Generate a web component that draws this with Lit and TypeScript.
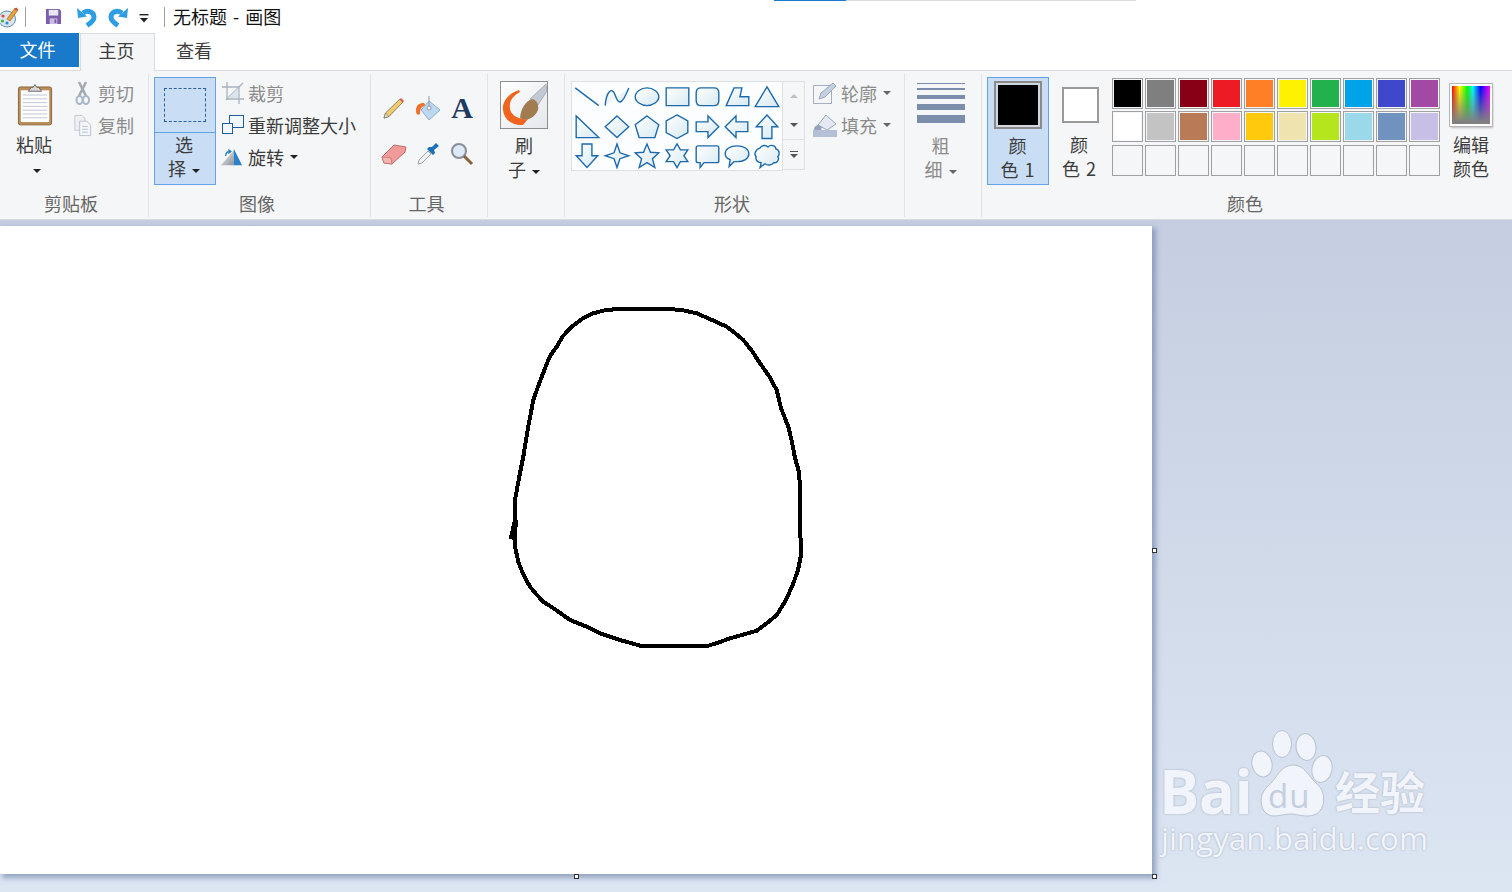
import { LitElement, html, css, svg } from "lit";
import { customElement } from "lit/decorators.js";

const SHAPES: string[] = [
  "M3 6L27 24",
  "M3 24C4 10 10 4 13 13S19 26 27 6",
  "M27 15C27 20 21 24 15 24S3 20 3 15 9 6 15 6 27 10 27 15Z",
  "M4 6H27V24H4Z",
  "M9 6H22Q27 6 27 11V19Q27 24 22 24H9Q4 24 4 19V11Q4 6 9 6Z",
  "M4 24L12 6H20L18 15H27V24Z",
  "M15 5L27 25H3Z",
  "M4 4V26H27Z",
  "M15 4L27 15 15 26 3 15Z",
  "M15 4L27 13 23 26H7L3 13Z",
  "M15 3L26 9V21L15 27 4 21V9Z",
  "M4 10H16V4L27 15 16 26V20H4Z",
  "M26 10H14V4L3 15 14 26V20H26Z",
  "M15 3L26 15H20V27H10V15H4Z",
  "M10 3H20V15H26L15 27 4 15H10Z",
  "M15 3L18 12 27 15 18 18 15 27 12 18 3 15 12 12Z",
  "M15 3L18.5 11.5 27 12 20.5 18 23 27 15 22 7 27 9.5 18 3 12 11.5 11.5Z",
  "M15 3L18.5 9H26L22 15 26 21H18.5L15 27 11.5 21H4L8 15 4 9H11.5Z",
  "M6 5H25Q27 5 27 7V20Q27 22 25 22H12L8 27V22H6Q4 22 4 20V7Q4 5 6 5Z",
  "M15 5C22 5 27 8 27 13S22 21 15 21H12L7 26 8 19C5 18 3 16 3 13 3 8 8 5 15 5Z",
  "M8 7C10 4 14 4 16 6 19 3 24 5 24 8 28 9 28 14 26 16 28 19 25 23 22 22 20 25 15 25 13 23L8 27 9 22C5 22 3 19 4 16 1 13 4 8 8 7Z",
];

const PALETTE = [
  "#000000","#7f7f7f","#880015","#ed1c24","#ff7f27","#fff200","#22b14c","#00a2e8","#3f48cc","#a349a4",
  "#ffffff","#c3c3c3","#b97a57","#ffaec9","#ffc90e","#efe4b0","#b5e61d","#99d9ea","#7092be","#c8bfe7",
  "","","","","","","","","","",
];

const BLOB = "510.7,539.3 515,520 515,500 519,478 523.3,456.7 528,428 533.3,400 539,384 545,368.3 550,356 556.7,346.7 563,336 571.7,326.7 582,319 593.3,313.3 604,310.5 616.7,309 670,309 684,310.5 696.7,313.3 712,320 726.7,326.7 735,333 743.3,340 752,351 760,363.3 769,376 776.7,390 781,408 788.3,426.7 792,442 795,458 799,472 800,486.7 800.7,556.7 798,570 793.3,583.3 786,600 776.7,615 767,623 756.7,630.7 742,635 730,638.3 720,642 708.3,645.7 640,645.7 620,640 600,633.3 585,626 570,620 556,610 543.3,601.7 536,594 530,586.7 523,574 518.3,561.7 515,546.7 515.7,520";

const caret = html`<i class="caret"></i>`;

@customElement("app-root")
export class AppRoot extends LitElement {
  static styles = css`
    :host {
      display: flex;
      flex-direction: column;
      width: 1512px;
      height: 892px;
      overflow: hidden;
      position: relative;
      background: #fff;
      font-family: "Noto Sans CJK SC", "Liberation Sans", sans-serif;
      font-size: 18px;
      color: #3c3c3c;
    }
    svg { display: block; flex: none; }
    .caret {
      display: inline-block;
      width: 0; height: 0;
      border: 4px solid transparent;
      border-top: 4px solid #222;
      border-bottom: 0;
      vertical-align: middle;
      margin-left: 6px;
    }
    .dim .caret { border-top-color: #666; }
    .dim { color: #8b8b8b; }

    /* title */
    .title { height: 33px; display: flex; align-items: center; flex: none; position: relative; }
    .title .sep { width: 1px; height: 20px; background: #a0a0a0; }
    .title .name { color: #111; line-height: 33px; white-space: pre; margin-left: 8px; word-spacing: 2px; }
    .progress { position: absolute; top: 0; left: 774px; width: 362px; height: 1px; background: #dcdcdc; }
    .progress b { display: block; width: 72px; height: 1px; background: #1979ca; }

    /* tabs */
    .tabs { height: 38px; display: flex; flex: none; border-bottom: 1px solid #dadbdc; box-sizing: border-box; }
    .tab { line-height: 34px; text-align: center; box-sizing: border-box; }
    .file { width: 79px; height: 34px; background: #1979ca; color: #fff; padding-right: 4px; line-height: 32px; }
    .home {
      width: 75px; height: 38px; margin-left: 1px;
      background: #f5f6f7; border: 1px solid #dadbdc; border-bottom: 0; padding-right: 2px; line-height: 33px;
    }
    .view { width: 36px; margin-left: 21px; }

    /* ribbon */
    .ribbon { height: 149px; display: flex; background: #f5f6f7; flex: none; border-bottom: 1px solid #d9dadb; box-sizing: border-box; }
    .group { display: flex; flex-direction: column; flex: none; position: relative; }
    .group::after { content: ""; position: absolute; right: 0; top: 3px; height: 143px; width: 1px; background: #e2e3e4; }
    .group.last::after { display: none; }
    .body { height: 120px; display: flex; box-sizing: border-box; }
    .label { text-align: center; line-height: 24px; color: #666; height: 24px; }
    .stack { line-height: 24px; text-align: center; }
    .big { display: flex; flex-direction: column; align-items: center; flex: none; }
    .row { display: flex; align-items: center; height: 32px; white-space: nowrap; }

    .paste { width: 56px; margin: 12px 0 0 6px; }
    .paste .stack { margin-top: 6px; }
    .small { margin: 6px 0 0 11px; }
    .small .row svg { margin-right: 2px; }

    .select {
      width: 62px; height: 108px; margin: 6px 0 0 5px; box-sizing: border-box;
      background: #c9def5; border: 1px solid #64a3e4;
      display: flex; flex-direction: column; align-items: center;
    }
    .select .top { width: 100%; height: 54px; border-bottom: 1px solid #64a3e4; display: flex; align-items: center; justify-content: center; flex: none; }
    .select .dash { width: 42px; height: 34px; border: 1px dashed #2a5f9e; box-sizing: border-box; }
    .select .stack { margin-top: -1px; padding-right: 2px; }
    .image-rows { margin: 6px 0 0 6px; }
    .image-rows svg { margin-right: 4px; }

    .tools { display: grid; grid-template-columns: repeat(3, 34px); grid-auto-rows: 46px; margin: 14px 0 0 6px; justify-items: center; align-items: center; }

    .brush { width: 72px; padding-top: 10px; }
    .brush .stack { margin-top: 4px; }
    .brush .thumb { width: 48px; height: 48px; box-sizing: border-box; border: 1px solid #8f8f8f; background: linear-gradient(135deg, #ffffff, #e4e7ec); }

    .gallery {
      width: 212px; height: 90px; margin: 10px 0 0 6px; box-sizing: border-box;
      border: 1px solid #dfe0e1; background: #fbfdff;
      display: grid; grid-template-columns: repeat(7, 30px); grid-auto-rows: 29.5px; flex: none;
    }
    .scroll { width: 22px; height: 89px; margin: 10px 0 0 0; box-sizing: border-box; border: 1px solid #dfe0e1; border-left: 0; display: flex; flex-direction: column; flex: none; }
    .scroll span { flex: 1; display: flex; align-items: center; justify-content: center; }
    .scroll span:last-child { border-top: 1px solid #dfe0e1; flex-direction: column; gap: 2px; }
    .up { width: 0; height: 0; border: 4px solid transparent; border-bottom: 4px solid #c0c0c0; border-top: 0; }
    .dn { width: 0; height: 0; border: 4px solid transparent; border-top: 4px solid #555; border-bottom: 0; }
    .bar { width: 8px; height: 1px; background: #555; }
    .fills { margin: 6px 0 0 8px; }
    .fills svg { margin-right: 4px; }

    .size { width: 71px; padding-top: 12px; }
    .size .lines { width: 48px; display: flex; flex-direction: column; align-items: stretch; margin-bottom: 10px; }
    .lines i { display: block; background: #7c8cab; }
    .l1 { height: 1px; margin-bottom: 4px; }
    .l2 { height: 2px; margin-bottom: 5px; }
    .l3 { height: 4px; margin-bottom: 5px; }
    .l4 { height: 6px; margin-bottom: 5px; }
    .l5 { height: 8px; }

    .colorbtn {
      width: 62px; height: 108px; margin: 6px 0 0 5px; box-sizing: border-box;
      background: #c9def5; border: 1px solid #64a3e4; padding-top: 3px;
    }
    .sw1 { width: 48px; height: 48px; box-sizing: border-box; border: 2px solid #8a8a8a; padding: 2px; background: #d3d8de; }
    .sw1 b { display: block; width: 100%; height: 100%; background: #000; }
    .colorbtn .stack { margin-top: 4px; word-spacing: 2px; padding-right: 1px; }
    .color2 { width: 62px; height: 108px; margin: 6px 0 0 0; padding-top: 10px; box-sizing: border-box; }
    .sw2 { width: 37px; height: 36px; box-sizing: border-box; border: 2px solid #9a9a9a; background: #fff; }
    .color2 .stack { margin-top: 9px; word-spacing: 2px; padding-right: 2px; }
    .palette { display: grid; grid-template-columns: repeat(10, 31px); column-gap: 2px; row-gap: 2.4px; grid-auto-rows: 31px; margin: 7px 0 0 1px; flex: none; }
    .cell { box-sizing: border-box; border: 1px solid #a0a0a0; padding: 1px; }
    .cell.empty { padding: 0; }
    .cell b { display: block; width: 100%; height: 100%; }
    .edit { width: 62px; padding-top: 13px; margin-left: 0; }
    .spectrum {
      width: 42px; height: 42px; box-sizing: border-box; border: 2px solid #fff; outline: 1px solid #b5b5b5;
      box-shadow: 1px 2px 2px rgba(0,0,0,.25);
      background:
        linear-gradient(to bottom, transparent, #808080 95%),
        linear-gradient(to right, #f00, #ff0 20%, #0f0 40%, #0ff 55%, #00f 75%, #f0f 100%);
    }
    .edit .stack { margin-top: 6px; }

    /* workspace */
    .work {
      flex: 1; position: relative; padding-top: 6px; box-sizing: border-box;
      background: linear-gradient(to bottom, #c4cee0, #dce5f2);
    }
    .canvas {
      width: 1152px; height: 648px; background: #fff; position: relative;
      box-shadow: 3px 3px 5px 1px rgba(110,130,170,.65);
    }
    .canvas svg { position: absolute; inset: 0; }
    .handle { position: absolute; width: 5px; height: 5px; box-sizing: border-box; background: #fff; border: 1px solid #333; }
    .h1 { left: 1152px; top: 322px; }
    .h2 { left: 574px; top: 648px; }
    .h3 { left: 1152px; top: 648px; }

    /* watermark */
    .mark { position: absolute; left: 1160px; top: 508px; width: 280px; height: 135px; color: #f1f4fa; pointer-events: none; }
    .mark span { position: absolute; white-space: nowrap; text-shadow: 0 0 2px rgba(130,140,160,.7); }
    .bai { left: -1px; top: 40px; font: 700 60px/46px "Open Sans", sans-serif; letter-spacing: -.5px; }
    .mark .du { left: 108px; top: 54px; font: 400 33px/28px "Open Sans", sans-serif; letter-spacing: 1px; color: #c3cede; text-shadow: none; }
    .cn { left: 175px; top: 40px; font: 700 45px/46px "Noto Sans CJK SC", sans-serif; }
    .url { left: 1px; top: 94px; font: 400 31.4px/32px "Open Sans", sans-serif; }
    .mark svg { position: absolute; left: 0; top: 0; }
  `;

  private shapeCell(d: string) {
    return html`<svg width="30" height="29.5" viewBox="0 0 30 30">
      <path d=${d} fill="url(#sg)" stroke="#1c69ab" stroke-width="1.4" stroke-linejoin="miter"></path>
    </svg>`;
  }

  render() {
    return html`
      <svg width="0" height="0" style="position:absolute">
        <defs>
          <linearGradient id="sg" x1="0" y1="0" x2="1" y2="1">
            <stop offset="0" stop-color="#ffffff"></stop>
            <stop offset="1" stop-color="#d6e9f2"></stop>
          </linearGradient>
          <linearGradient id="rot" x1="0" y1="0" x2="1" y2="1">
            <stop offset="0" stop-color="#f2f3f4"></stop>
            <stop offset="1" stop-color="#8f949a"></stop>
          </linearGradient>
        </defs>
      </svg>

      <div class="title">
        <div class="progress"><b></b></div>
        <svg width="20" height="26" viewBox="0 0 20 26" style="margin-left:-1px">
          <ellipse cx="8" cy="15" rx="8.5" ry="8" fill="#d9e6ef" stroke="#5f8fb5"></ellipse>
          <circle cx="4" cy="12" r="1.6" fill="#e8483c"></circle>
          <circle cx="3.5" cy="17" r="1.6" fill="#4bb04f"></circle>
          <circle cx="8" cy="19" r="1.6" fill="#3c86d8"></circle>
          <path d="M8 15L16 4 19 6 11 17Z" fill="#e9a23b" stroke="#a5651c" stroke-width=".7"></path>
          <path d="M15 5L18 3.5 19 6 17 6.5Z" fill="#c8593a"></path>
        </svg>
        <div class="sep" style="margin-left:6px"></div>
        <svg width="17" height="17" viewBox="0 0 18 18" style="margin-left:19px">
          <path d="M1 1H15L17 3V17H1Z" fill="#7b5ea9"></path>
          <rect x="4" y="2" width="10" height="6" fill="#e9e6f3"></rect>
          <rect x="5" y="11" width="8" height="6" fill="#c9bfe0"></rect>
          <rect x="10" y="12" width="2" height="4" fill="#7b5ea9"></rect>
        </svg>
        <svg width="20" height="22" viewBox="0 0 20 22" style="margin-left:15px">
          <path d="M6 7C11 3.5 17 6 17 11 17 14.5 14 17 10 19.5" fill="none" stroke="#2f9de4" stroke-width="5"></path>
          <path d="M0 2L1 12 10 10.5Z" fill="#2f9de4"></path>
        </svg>
        <svg width="20" height="22" viewBox="0 0 20 22" style="margin-left:11px">
          <path d="M14 7C9 3.5 3 6 3 11 3 14.5 6 17 10 19.5" fill="none" stroke="#2f9de4" stroke-width="5"></path>
          <path d="M20 2L19 12 10 10.5Z" fill="#2f9de4"></path>
        </svg>
        <svg width="10" height="10" viewBox="0 0 10 10" style="margin-left:11px;margin-top:5px">
          <rect x="0.5" y="0" width="9" height="1.4" fill="#222"></rect>
          <path d="M1 4H9L5 8.5Z" fill="#222"></path>
        </svg>
        <div class="sep" style="margin-left:15px"></div>
        <div class="name">无标题 - 画图</div>
      </div>

      <div class="tabs">
        <div class="tab file">文件</div>
        <div class="tab home">主页</div>
        <div class="tab view">查看</div>
      </div>

      <div class="ribbon">
        <div class="group" style="width:149px">
          <div class="body">
            <div class="big paste">
              <svg width="36" height="43" viewBox="0 0 38 44" style="margin-left:2px">
                <rect x="1.5" y="3.5" width="35" height="40" rx="2" fill="#b98d5a" stroke="#8a6335"></rect>
                <rect x="4" y="7" width="30" height="33.5" fill="#fdfdfd"></rect>
                <path d="M6 12H32M6 16H32M6 20H32M6 24H32M6 28H32M6 32H32M6 36H32" stroke="#bcc7d6"></path>
                <path d="M12 8L15 4H17L19 1 21 4H23L26 8Z" fill="#d9d9d9" stroke="#666"></path>
              </svg>
              <div class="stack">粘贴<br />${caret}</div>
            </div>
            <div class="small dim">
              <div class="row">
                <svg width="18" height="24" viewBox="0 0 18 24" style="margin-left:2px;margin-right:5px">
                  <path d="M4 1L11 15M11 1L4 15" stroke="#a5aab2" stroke-width="2.6"></path>
                  <ellipse cx="4.5" cy="19" rx="3" ry="4" fill="none" stroke="#a9b6c9" stroke-width="2"></ellipse>
                  <ellipse cx="11" cy="19" rx="3" ry="4" fill="none" stroke="#a9b6c9" stroke-width="2"></ellipse>
                </svg>
                <span>剪切</span>
              </div>
              <div class="row">
                <svg width="20" height="23" viewBox="0 0 20 24" style="margin-right:5px">
                  <path d="M1.5 1.5H9L12 4.5V17H1.5Z" fill="#eef0f3" stroke="#c3c8d0"></path>
                  <path d="M6.5 7.5H14L18 11.5V22.5H6.5Z" fill="#f3f5f8" stroke="#b9c2d0"></path>
                  <path d="M9 13H15M9 16H15M9 19H15" stroke="#b7c3d3"></path>
                </svg>
                <span>复制</span>
              </div>
            </div>
          </div>
          <div class="label" style="margin-right:7px">剪贴板</div>
        </div>

        <div class="group" style="width:222px">
          <div class="body">
            <div class="select">
              <div class="top"><div class="dash"></div></div>
              <div class="stack">选<br />择${caret}</div>
            </div>
            <div class="image-rows">
              <div class="row dim">
                <svg width="22" height="22" viewBox="0 0 22 22">
                  <path d="M5 0V17H22M0 5H17V22" fill="none" stroke="#a8b2c0" stroke-width="1.3"></path>
                  <path d="M4 18L21 1" stroke="#a8b2c0" stroke-width="1.3"></path>
                  <path d="M6 16L16 6V16Z" fill="#dde4ec"></path>
                </svg>
                <span>裁剪</span>
              </div>
              <div class="row">
                <svg width="22" height="20" viewBox="0 0 22 20">
                  <rect x="7.5" y="0.5" width="14" height="12" fill="#f3f8fc" stroke="#1c5f9c"></rect>
                  <rect x="0.5" y="8.5" width="10" height="10" fill="#f5f6f7" stroke="#1c5f9c"></rect>
                </svg>
                <span>重新调整大小</span>
              </div>
              <div class="row">
                <svg width="22" height="20" viewBox="0 0 24 20" style="margin-left:-1px;margin-right:5px">
                  <path d="M0 19L14 3V19Z" fill="url(#rot)"></path>
                  <path d="M14 1L23 19H14Z" fill="#2a83c9"></path>
                  <path d="M5 9C5 5 7 4 10 4" fill="none" stroke="#2a83c9" stroke-width="1.5"></path>
                  <path d="M8 1L12 4 8 7Z" fill="#2a83c9"></path>
                </svg>
                <span>旋转</span>${caret}
              </div>
            </div>
          </div>
          <div class="label" style="margin-right:6px">图像</div>
        </div>

        <div class="group" style="width:117px">
          <div class="body">
            <div class="tools">
              <svg width="24" height="24" viewBox="0 0 24 24">
                <path d="M2 22L3.5 17 18 3 21 6 7 20.5Z" fill="#f0cc6a" stroke="#6e6a60" stroke-width=".8"></path>
                <path d="M17.5 3.5L20.5 6.5 22 5 19 2Z" fill="#d8574f"></path>
                <path d="M2 22L3.5 17 7 20.5Z" fill="#efe1c0" stroke="#555" stroke-width=".5"></path>
              </svg>
              <svg width="26" height="26" viewBox="0 0 26 26">
                <path d="M1 16C1 10 4 8 9 8L11 11C7 11 5 13 5 19 3 21 1 19 1 16Z" fill="#f3702a"></path>
                <path d="M14 6L25 15 14 25 6 15Z" fill="#bcd7ee" stroke="#8cb1d1"></path>
                <path d="M14 1V12" stroke="#8a96a6"></path>
                <circle cx="14" cy="13" r="2" fill="#fff" stroke="#8a96a6"></circle>
              </svg>
              <span style="font:700 30px/30px 'Liberation Serif',serif;color:#1f3a63">A</span>
              <svg width="26" height="22" viewBox="0 0 26 22">
                <path d="M1 14L13 2 25 4 24 9 11 21 3 20Z" fill="#f19a9a" stroke="#c66b6b"></path>
                <path d="M1 14L3 20 11 21 10 15Z" fill="#f3b7b0" stroke="#c66b6b" stroke-width=".7"></path>
              </svg>
              <svg width="24" height="24" viewBox="0 0 24 24">
                <path d="M2 22L3 18 12 9 15 12 6 21Z" fill="#f0f3f6" stroke="#9aa5b0"></path>
                <path d="M11 7L17 13 19 11 18 8 23 4 20 1 16 5 13 5Z" fill="#1d6fb8"></path>
              </svg>
              <svg width="24" height="24" viewBox="0 0 24 24">
                <circle cx="9" cy="9" r="7" fill="#dbe9f8" stroke="#8a8f96" stroke-width="2"></circle>
                <path d="M14 14L22 22" stroke="#86613a" stroke-width="3"></path>
              </svg>
            </div>
          </div>
          <div class="label" style="margin-right:6px">工具</div>
        </div>

        <div class="group" style="width:77px">
          <div class="body">
            <div class="big brush">
              <div class="thumb">
                <svg width="46" height="46" viewBox="0 0 46 46">
                  <path d="M18 8C8 11 1 19 2 28 3 38 12 44 22 43L27 37C18 38 9 33 9 26 8 19 12 14 19 10Z" fill="#f0641f"></path>
                  <path d="M45 2L46 9 37 23 29 17Z" fill="#c3c8d3" stroke="#7b8494" stroke-width=".5"></path>
                  <path d="M19 36C20 26 24 20 31 17 36 18 38 23 37 28 34 35 27 40 19 36Z" fill="#a07c50"></path>
                </svg>
              </div>
              <div class="stack">刷<br />子${caret}</div>
            </div>
          </div>
        </div>

        <div class="group" style="width:340px">
          <div class="body">
            <div class="gallery">${SHAPES.map((d) => this.shapeCell(d))}</div>
            <div class="scroll">
              <span><i class="up"></i></span>
              <span><i class="dn"></i></span>
              <span><i class="bar"></i><i class="dn"></i></span>
            </div>
            <div class="fills dim">
              <div class="row">
                <svg width="24" height="22" viewBox="0 0 24 22">
                  <rect x="0.5" y="3.5" width="18" height="18" fill="#f5f6f7" stroke="#a4afc3"></rect>
                  <path d="M6 17L8 11 20 1 23 4 12 15Z" fill="#c5cfe2" stroke="#8d9ab3" stroke-width=".8"></path>
                </svg>
                <span>轮廓</span>${caret}
              </div>
              <div class="row">
                <svg width="24" height="24" viewBox="0 0 24 24">
                  <path d="M13 2L23 11 14 17 5 12Z" fill="#e5eaf2" stroke="#96a4bc"></path>
                  <path d="M5 12C2 13 1 14 1 17H8L9 14Z" fill="#96a4bc"></path>
                  <rect x="0" y="17" width="24" height="7" fill="#b3c0d6"></rect>
                </svg>
                <span>填充</span>${caret}
              </div>
            </div>
          </div>
          <div class="label" style="margin-right:6px">形状</div>
        </div>

        <div class="group" style="width:77px">
          <div class="body">
            <div class="big size dim">
              <div class="lines">
                <i class="l1"></i><i class="l2"></i><i class="l3"></i><i class="l4"></i><i class="l5"></i>
              </div>
              <div class="stack">粗<br />细${caret}</div>
            </div>
          </div>
        </div>

        <div class="group last" style="width:531px">
          <div class="body">
            <div class="big colorbtn">
              <div class="sw1"><b></b></div>
              <div class="stack">颜<br />色 1</div>
            </div>
            <div class="big color2">
              <div class="sw2"></div>
              <div class="stack">颜<br />色 2</div>
            </div>
            <div class="palette">
              ${PALETTE.map((c) =>
                c
                  ? html`<div class="cell"><b style="background:${c}"></b></div>`
                  : html`<div class="cell empty"></div>`
              )}
            </div>
            <div class="big edit">
              <div class="spectrum"></div>
              <div class="stack">编辑<br />颜色</div>
            </div>
          </div>
          <div class="label" style="margin-right:5px">颜色</div>
        </div>
      </div>

      <div class="work">
        <div class="canvas">
          <svg width="1152" height="648" viewBox="0 226 1152 648" shape-rendering="crispEdges">
            ${svg`<polyline points=${BLOB} fill="none" stroke="#000" stroke-width="4" stroke-linejoin="round"></polyline>`}
          </svg>
          <div class="handle h1"></div>
          <div class="handle h2"></div>
          <div class="handle h3"></div>
        </div>
        <div class="mark">
          <svg width="280" height="100" viewBox="0 0 280 100">
            <g fill="#f1f4fa" stroke="#b9c3d3" stroke-width="1">
              <ellipse cx="122" cy="16" rx="9.5" ry="13.5"></ellipse>
              <ellipse cx="146" cy="19" rx="10" ry="13.5" transform="rotate(-8 146 19)"></ellipse>
              <ellipse cx="102" cy="36" rx="10" ry="13" transform="rotate(-12 102 36)"></ellipse>
              <ellipse cx="162" cy="41" rx="10" ry="13.5" transform="rotate(12 162 41)"></ellipse>
              <path d="M133 37C145 37 148 48 157 56 168 65 166 88 148 88 140 88 136 86 131 86 125 86 120 88 114 88 100 88 97 68 107 59 117 51 120 37 133 37Z"></path>
            </g>
          </svg>
          <span class="bai">Bai</span>
          <span class="du">du</span>
          <span class="cn">经验</span>
          <span class="url">jingyan.baidu.com</span>
        </div>
      </div>
    `;
  }
}
